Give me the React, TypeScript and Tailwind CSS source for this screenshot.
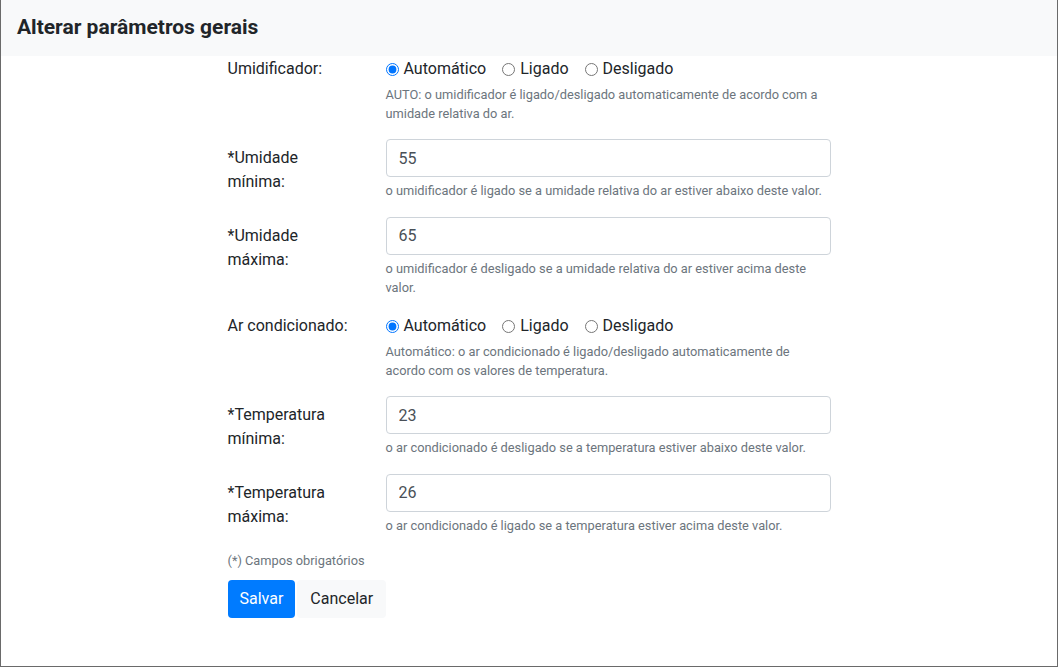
import { useState } from "react";

type Mode = "auto" | "on" | "off";

const modes: { value: Mode; label: string }[] = [
  { value: "auto", label: "Automático" },
  { value: "on", label: "Ligado" },
  { value: "off", label: "Desligado" },
];

const RadioGroup = ({ name, value, onChange }: { name: string; value: Mode; onChange: (v: Mode) => void }) => (
  <div className="flex items-center h-6">
    {modes.map((m) => (
      <label key={m.value} className="flex items-center mr-4 cursor-pointer">
        <input
          type="radio"
          name={name}
          checked={value === m.value}
          onChange={() => onChange(m.value)}
          className="m-0 mr-[5px] w-[13px] h-[13px]"
        />
        <span>{m.label}</span>
      </label>
    ))}
  </div>
);

const Help = ({ children }: { children: React.ReactNode }) => (
  <p className="mt-1 text-[12.8px] leading-[19.2px] text-[#6c757d]">{children}</p>
);

const NumberRow = ({ label, sub, value, help }: { label: string; sub: string; value: string; help: React.ReactNode }) => {
  const [v, setV] = useState(value);
  return (
    <div className="flex gap-[30px] mb-4">
      <label className="w-[128px] shrink-0 pt-[7px] leading-6">
        {label}
        <br />
        {sub}
      </label>
      <div className="flex-1">
        <input
          value={v}
          onChange={(e) => setV(e.target.value)}
          className="w-full h-[38px] px-3 border border-[#ced4da] rounded text-[#495057] outline-none focus:border-[#80bdff]"
        />
        <Help>{help}</Help>
      </div>
    </div>
  );
};

export default function App() {
  const [umid, setUmid] = useState<Mode>("auto");
  const [ar, setAr] = useState<Mode>("auto");

  return (
    <div
      className="h-[667px] border-x border-b border-[#6a6a6a] bg-white text-[#212529] text-base"
      style={{ fontFamily: 'Roboto, "Noto Sans", sans-serif' }}
    >
      <div className="h-14 bg-[#f8f9fa] flex items-center px-4">
        <h5 className="text-[21px] font-bold">Alterar parâmetros gerais</h5>
      </div>

      <div className="w-[603px] mx-auto pt-[1px]">
        <div className="flex gap-[30px] mb-4">
          <label className="w-[128px] shrink-0 leading-6">Umidificador:</label>
          <div className="flex-1">
            <RadioGroup name="umid" value={umid} onChange={setUmid} />
            <Help>
              AUTO: o umidificador é ligado/desligado automaticamente de acordo com a<br />
              umidade relativa do ar.
            </Help>
          </div>
        </div>

        <NumberRow
          label="*Umidade"
          sub="mínima:"
          value="55"
          help="o umidificador é ligado se a umidade relativa do ar estiver abaixo deste valor."
        />
        <NumberRow
          label="*Umidade"
          sub="máxima:"
          value="65"
          help={
            <>
              o umidificador é desligado se a umidade relativa do ar estiver acima deste
              <br />
              valor.
            </>
          }
        />

        <div className="flex gap-[30px] mb-4 pt-[1px]">
          <label className="w-[128px] shrink-0 leading-6">Ar condicionado:</label>
          <div className="flex-1">
            <RadioGroup name="ar" value={ar} onChange={setAr} />
            <Help>
              Automático: o ar condicionado é ligado/desligado automaticamente de
              <br />
              acordo com os valores de temperatura.
            </Help>
          </div>
        </div>

        <NumberRow
          label="*Temperatura"
          sub="mínima:"
          value="23"
          help="o ar condicionado é desligado se a temperatura estiver abaixo deste valor."
        />
        <NumberRow
          label="*Temperatura"
          sub="máxima:"
          value="26"
          help="o ar condicionado é ligado se a temperatura estiver acima deste valor."
        />

        <p className="text-[12.8px] leading-[19.2px] text-[#6c757d]">(*) Campos obrigatórios</p>

        <div className="flex gap-[2px] mt-[10px]">
          <button className="h-[38px] px-3 rounded bg-[#007bff] text-white">Salvar</button>
          <button className="h-[38px] px-[13px] rounded bg-[#f8f9fa] text-[#212529]">Cancelar</button>
        </div>
      </div>
    </div>
  );
}
